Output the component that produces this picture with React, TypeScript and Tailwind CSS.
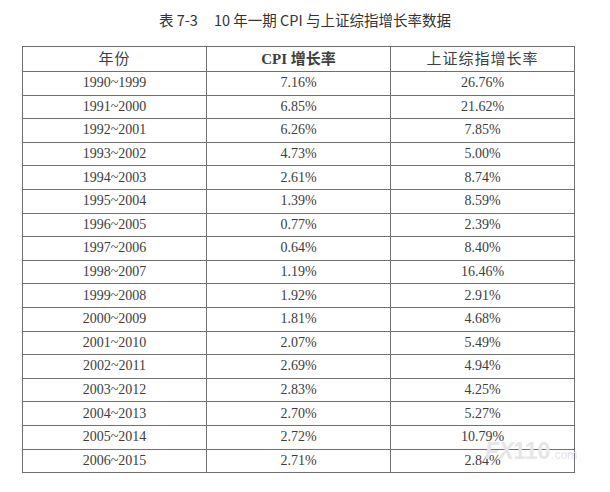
const rows: [string, string, string][] = [
  ['1990~1999', '7.16%', '26.76%'],
  ['1991~2000', '6.85%', '21.62%'],
  ['1992~2001', '6.26%', '7.85%'],
  ['1993~2002', '4.73%', '5.00%'],
  ['1994~2003', '2.61%', '8.74%'],
  ['1995~2004', '1.39%', '8.59%'],
  ['1996~2005', '0.77%', '2.39%'],
  ['1997~2006', '0.64%', '8.40%'],
  ['1998~2007', '1.19%', '16.46%'],
  ['1999~2008', '1.92%', '2.91%'],
  ['2000~2009', '1.81%', '4.68%'],
  ['2001~2010', '2.07%', '5.49%'],
  ['2002~2011', '2.69%', '4.94%'],
  ['2003~2012', '2.83%', '4.25%'],
  ['2004~2013', '2.70%', '5.27%'],
  ['2005~2014', '2.72%', '10.79%'],
  ['2006~2015', '2.71%', '2.84%'],
];

export default function App() {
  return (
    <div className="relative w-[610px] h-[492px] bg-white overflow-hidden">
      <div className="pt-[10px] h-[30px] flex justify-center text-[14.5px] leading-[20px] text-[#333] font-['Noto_Sans_CJK_SC',sans-serif] whitespace-pre">
        <span>表 7-3</span>
        <span className="ml-[16px]">10 年一期 CPI 与上证综指增长率数据</span>
      </div>

      <table className="mt-[16px] ml-[22px] w-[553px] border-collapse table-fixed text-[14px] text-[#3d3d3d] font-['Liberation_Serif','Noto_Sans_CJK_SC',serif]">
        <thead>
          <tr className="h-[25px] text-[15px]">
            <th className="border border-[#707070] font-normal p-0 tracking-[1px]">年份</th>
            <th className="border border-[#707070] font-bold p-0">CPI 增长率</th>
            <th className="border border-[#707070] font-normal p-0 tracking-[1px]">上证综指增长率</th>
          </tr>
        </thead>
        <tbody>
          {rows.map(([years, cpi, index]) => (
            <tr key={years} className="h-[23.6px]">
              <td className="border border-[#707070] text-center p-0 leading-none">{years}</td>
              <td className="border border-[#707070] text-center p-0 leading-none">{cpi}</td>
              <td className="border border-[#707070] text-center p-0 leading-none">{index}</td>
            </tr>
          ))}
        </tbody>
      </table>

      {/* watermark */}
      <div className="absolute left-[485px] top-[440px] flex items-baseline pointer-events-none select-none font-['Liberation_Sans',sans-serif] text-[#e6e6e6]">
        <span className="text-[23px] font-bold italic leading-none tracking-tight">FX</span>
        <span className="text-[23px] font-bold leading-none">110</span>
        <span className="text-[12px] leading-none ml-[1px]">.com</span>
      </div>
    </div>
  );
}
